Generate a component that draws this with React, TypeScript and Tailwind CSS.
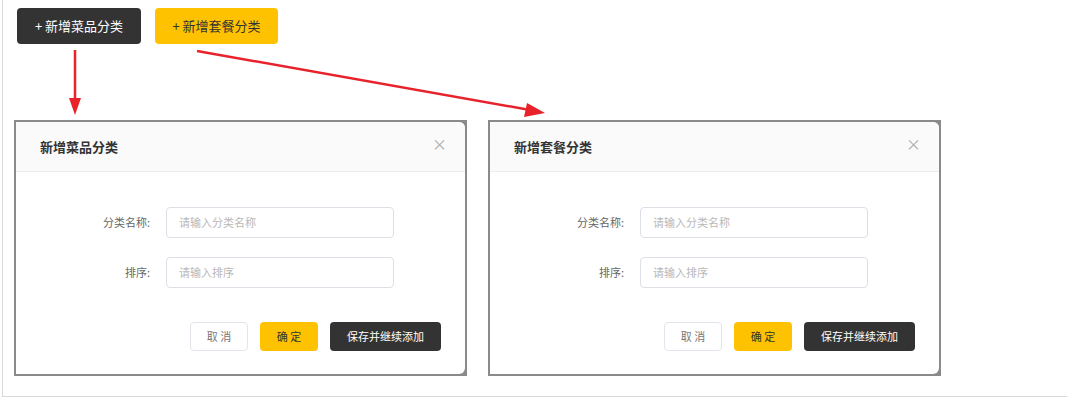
import React from "react";

const font = { fontFamily: '"Noto Sans CJK SC", "Noto Sans", sans-serif' };

const CategoryDialog = ({ title }: { title: string }) => {
  return (
    <div className="w-[453px] h-[256px] bg-[#8a8a8a] p-[2px]">
      <div className="h-full bg-white rounded-tr-[6px] rounded-br-[6px] overflow-hidden flex flex-col">
        <div className="h-[50px] bg-[#fafafa] border-b border-[#ececec] flex items-center justify-between pl-[24px] pr-[18px] shrink-0">
          <span className="text-[13px] font-bold text-[#333]">{title}</span>
          <span className="text-[#aaa] text-[15px] leading-none -mt-[6px]">×</span>
        </div>
        <div className="flex-1 flex flex-col pt-[35px]">
          <div className="flex items-center">
            <label className="w-[134px] text-right text-[11px] text-[#666]">分类名称:</label>
            <div className="ml-[16px] w-[228px] h-[31px] border border-[#dcdfe6] rounded-[4px] flex items-center pl-[12px] text-[11px] text-[#b8b8b8]">
              请输入分类名称
            </div>
          </div>
          <div className="flex items-center mt-[19px]">
            <label className="w-[134px] text-right text-[11px] text-[#666]">排序:</label>
            <div className="ml-[16px] w-[228px] h-[31px] border border-[#dcdfe6] rounded-[4px] flex items-center pl-[12px] text-[11px] text-[#b8b8b8]">
              请输入排序
            </div>
          </div>
          <div className="flex justify-end gap-[12px] pr-[24px] mt-[34px]">
            <button className="w-[58px] h-[29px] border border-[#e2e6ec] rounded-[4px] bg-white text-[11px] text-[#777] whitespace-pre">
              {"取 消"}
            </button>
            <button className="w-[58px] h-[29px] rounded-[4px] bg-[#ffc200] text-[11px] text-[#333] whitespace-pre">
              {"确 定"}
            </button>
            <button className="w-[111px] h-[29px] rounded-[4px] bg-[#333] text-[11px] text-white">
              保存并继续添加
            </button>
          </div>
        </div>
      </div>
    </div>
  );
};

export default function App() {
  return (
    <div className="relative w-[1067px] h-[398px] bg-white" style={font}>
      <div className="ml-[2px] h-[397px] border-l border-b border-[#d9d9d9] flex flex-col">
        <div className="flex gap-[14px] pl-[14px] pt-[8px]">
          <button className="w-[124px] h-[36px] rounded-[4px] bg-[#333] text-white text-[13px] whitespace-pre">
            {"+ 新增菜品分类"}
          </button>
          <button className="w-[123px] h-[36px] rounded-[4px] bg-[#ffc200] text-[#333] text-[13px] whitespace-pre">
            {"+ 新增套餐分类"}
          </button>
        </div>
        <div className="flex gap-[21px] pl-[11px] mt-[76px]">
          <CategoryDialog title="新增菜品分类" />
          <CategoryDialog title="新增套餐分类" />
        </div>
      </div>
      {/* red annotation arrows */}
      <svg className="absolute inset-0 pointer-events-none" width="1067" height="398">
        <line x1="75" y1="50" x2="75" y2="102" stroke="#e8222b" strokeWidth="2.5" />
        <polygon points="69,98 81,98 75,115" fill="#e8222b" />
        <line x1="197" y1="51" x2="530" y2="110" stroke="#e8222b" strokeWidth="2.5" />
        <polygon points="527,103 545,113 524,117" fill="#e8222b" />
      </svg>
    </div>
  );
}
